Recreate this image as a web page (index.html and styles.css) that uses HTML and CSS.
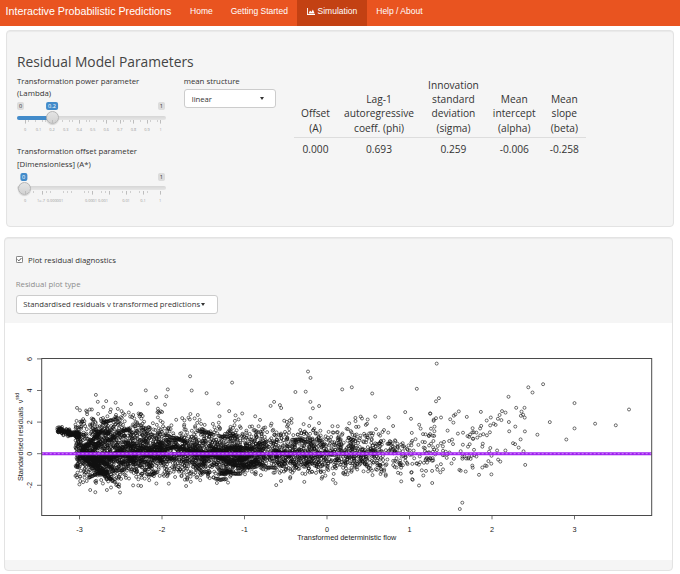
FILE: index.html
```html
<!DOCTYPE html>
<html lang="en">
<head>
<meta charset="utf-8">
<title>Interactive Probabilistic Predictions</title>
<link rel="stylesheet" href="styles.css">
</head>
<body>
<nav class="navbar">
  <span class="brand">Interactive Probabilistic Predictions</span>
  <ul class="nav">
    <li><a>Home</a></li>
    <li><a>Getting Started</a></li>
    <li class="active"><a><svg class="nav-icon" width="8" height="7" viewBox="0 0 8 7"><path d="M0 0h0.9v6.1H8V7H0z" fill="#fff"/><path d="M1.6 5.6L3 2.6l1.5 1.5 1.4-2.7 1.7 4.2z" fill="#fff"/></svg>Simulation</a></li>
    <li><a>Help / About</a></li>
  </ul>
</nav>

<section class="well params">
  <h3 class="title">Residual Model Parameters</h3>
  <div class="param-row">
    <div class="col-sliders">
      <div class="field">
        <label class="ctl-label">Transformation power parameter (Lambda)</label>
        <div class="slider">
          <span class="irs-min">0</span>
          <span class="irs-max">1</span>
          <span class="irs-single" style="left:35px">0.2</span>
          <span class="irs-line"></span>
          <span class="irs-bar" style="width:35.1px"></span>
          <span class="irs-handle" style="left:35.1px"></span>
          <span class="irs-grid grid-10"></span>
          <span class="irs-grid-text" style="left:8px">0</span>
          <span class="irs-grid-text" style="left:21.55px">0.1</span>
          <span class="irs-grid-text" style="left:35.1px">0.2</span>
          <span class="irs-grid-text" style="left:48.65px">0.3</span>
          <span class="irs-grid-text" style="left:62.2px">0.4</span>
          <span class="irs-grid-text" style="left:75.75px">0.5</span>
          <span class="irs-grid-text" style="left:89.3px">0.6</span>
          <span class="irs-grid-text" style="left:102.85px">0.7</span>
          <span class="irs-grid-text" style="left:116.4px">0.8</span>
          <span class="irs-grid-text" style="left:129.95px">0.9</span>
          <span class="irs-grid-text" style="left:143.5px">1</span>
        </div>
      </div>
      <div class="field">
        <label class="ctl-label">Transformation offset parameter [Dimensionless] (A*)</label>
        <div class="slider">
          <span class="irs-max">1</span>
          <span class="irs-single" style="left:6.7px">0</span>
          <span class="irs-line"></span>
          <span class="irs-handle" style="left:7px"></span>
          <span class="irs-grid grid-8"></span>
          <span class="irs-grid-text" style="left:8px">0</span>
          <span class="irs-grid-text" style="left:24px">1e-7</span>
          <span class="irs-grid-text" style="left:38px">0.000001</span>
          <span class="irs-grid-text" style="left:74px">0.0001</span>
          <span class="irs-grid-text" style="left:86px">0.001</span>
          <span class="irs-grid-text" style="left:109px">0.01</span>
          <span class="irs-grid-text" style="left:126px">0.1</span>
          <span class="irs-grid-text" style="left:143px">1</span>
        </div>
      </div>
    </div>

    <div class="col-select">
      <label class="ctl-label">mean structure</label>
      <div class="select"><span>linear</span><span class="caret"></span></div>
    </div>

    <table class="ptable">
      <thead>
        <tr>
          <th>Offset<br>(A)</th>
          <th>Lag-1<br>autoregressive<br>coeff. (phi)</th>
          <th>Innovation<br>standard<br>deviation<br>(sigma)</th>
          <th>Mean<br>intercept<br>(alpha)</th>
          <th>Mean<br>slope<br>(beta)</th>
        </tr>
      </thead>
      <tbody>
        <tr>
          <td>0.000</td>
          <td>0.693</td>
          <td>0.259</td>
          <td>-0.006</td>
          <td>-0.258</td>
        </tr>
      </tbody>
    </table>
  </div>
</section>

<section class="well diag">
  <div class="controls">
    <label class="check">
      <svg class="cb" width="7" height="7" viewBox="0 0 7 7"><rect x="0.4" y="0.4" width="6.2" height="6.2" rx="1" fill="#fff" stroke="#555" stroke-width="0.8"/><path d="M1.6 3.5l1.3 1.3 2.5-2.7" fill="none" stroke="#333" stroke-width="0.9"/></svg>
      <span>Plot residual diagnostics</span>
    </label>
    <div class="muted-label">Residual plot type</div>
    <div class="select wide"><span>Standardised residuals v transformed predictions</span><span class="caret"></span></div>
  </div>
  <div class="plot">
    <svg class="plot-svg" width="667" height="237" viewBox="0 0 667 237">
      <g id="pts" fill="none" stroke="#111" stroke-width="0.6"></g>
      <line x1="36.7" y1="130.7" x2="646.7" y2="130.7" stroke="#a020f0" stroke-width="3"/>
      <line x1="36.7" y1="130.7" x2="646.7" y2="130.7" stroke="#dba8f8" stroke-width="0.8" stroke-dasharray="2 2"/>
      <rect x="36.7" y="35.5" width="610" height="157" fill="none" stroke="#4a4a4a" stroke-width="1"/>
      <g stroke="#4a4a4a" stroke-width="0.8">
        <line x1="32" y1="35.9" x2="36.7" y2="35.9"/>
        <line x1="32" y1="67.5" x2="36.7" y2="67.5"/>
        <line x1="32" y1="99.1" x2="36.7" y2="99.1"/>
        <line x1="32" y1="130.7" x2="36.7" y2="130.7"/>
        <line x1="32" y1="162.3" x2="36.7" y2="162.3"/>
        <line x1="74.5" y1="192.5" x2="74.5" y2="196.3"/>
        <line x1="157" y1="192.5" x2="157" y2="196.3"/>
        <line x1="239.5" y1="192.5" x2="239.5" y2="196.3"/>
        <line x1="322" y1="192.5" x2="322" y2="196.3"/>
        <line x1="404.5" y1="192.5" x2="404.5" y2="196.3"/>
        <line x1="487" y1="192.5" x2="487" y2="196.3"/>
        <line x1="569.5" y1="192.5" x2="569.5" y2="196.3"/>
      </g>
      <g class="axis-text" text-anchor="middle">
        <text transform="translate(26.9,35.9) rotate(-90)">6</text>
        <text transform="translate(26.9,67.5) rotate(-90)">4</text>
        <text transform="translate(26.9,99.1) rotate(-90)">2</text>
        <text transform="translate(26.9,130.7) rotate(-90)">0</text>
        <text transform="translate(26.9,162.3) rotate(-90)">-2</text>
        <text x="74.5" y="208.6">-3</text>
        <text x="157" y="208.6">-2</text>
        <text x="239.5" y="208.6">-1</text>
        <text x="322" y="208.6">0</text>
        <text x="404.5" y="208.6">1</text>
        <text x="487" y="208.6">2</text>
        <text x="569.5" y="208.6">3</text>
        <text x="341.7" y="217.3">Transformed deterministic flow</text>
        <text transform="translate(18.3,114) rotate(-90)">Standardised residuals <tspan dx="1.5">ν</tspan><tspan dy="-4" font-size="5">std</tspan></text>
      </g>
    </svg>
  </div>
</section>
<script src="script.js"></script>
</body>
</html>
```

FILE: styles.css
```css
* { box-sizing: border-box; }
html, body { margin: 0; padding: 0; background: #fff; }
body {
  width: 680px;
  font-family: "Open Sans", "DejaVu Sans", sans-serif;
  font-size: 7.7px;
  color: #333;
}

/* navbar */
.navbar {
  display: flex;
  height: 26px;
  background: #e95420;
  color: #fff;
  font-family: "Liberation Sans", Arial, sans-serif;
}
.brand {
  font-size: 10.7px;
  line-height: 23px;
  padding: 0 9.7px 3px 5.6px;
  white-space: nowrap;
}
.nav { display: flex; list-style: none; margin: 0; padding: 0; }
.nav a {
  display: flex;
  align-items: center;
  height: 26px;
  padding: 0 9px 2.5px;
  font-size: 8.5px;
  line-height: 23.5px;
  white-space: nowrap;
}
.nav .active a { background: #c34113; padding: 0 10px 2.5px; }
.nav-icon { margin-right: 2.7px; }

/* wells */
.well {
  background: #f5f5f5;
  border: 1px solid #e3e3e3;
  border-radius: 4px;
  box-shadow: inset 0 1px 1px rgba(0,0,0,0.05);
}
.params { margin: 3.5px 6px 0 6px; padding: 21.3px 10px 9.5px; }
.title {
  margin: 0 0 4px;
  font-size: 13.8px;
  line-height: 19px;
  font-weight: 400;
  color: #444;
}
.param-row { display: flex; align-items: flex-start; }
.col-sliders { width: 150px; }
.col-select { width: 92.3px; margin-left: 16.7px; }
.ctl-label {
  display: block;
  font-size: 7.8px;
  line-height: 12.3px;
  color: #333;
}

/* slider */
.slider { position: relative; height: 46.1px; }
.irs-min, .irs-max, .irs-single {
  position: absolute;
  top: 2.6px;
  height: 8px;
  line-height: 8px;
  font-size: 5.6px;
  padding: 0 2px;
  border-radius: 2px;
}
.irs-min { left: 0; background: rgba(0,0,0,0.1); color: #333; }
.irs-max { right: 2px; background: rgba(0,0,0,0.1); color: #333; }
.irs-single { background: #428bca; color: #fff; transform: translateX(-50%); }
.irs-line {
  position: absolute;
  top: 16.3px; left: 0; right: 1px;
  height: 4px;
  border-radius: 2px;
  background: linear-gradient(#d6d6d6, #e6e6e6);
}
.irs-bar {
  position: absolute;
  top: 16.3px; left: 0;
  height: 4px;
  border-radius: 2px 0 0 2px;
  background: #428bca;
}
.irs-handle {
  position: absolute;
  top: 11.8px;
  width: 13px; height: 13px;
  margin-left: -6.5px;
  border-radius: 50%;
  background: linear-gradient(#e4e4e4, #d2d2d2);
  border: 1px solid #b5b5b5;
  box-shadow: 0 1px 1px rgba(0,0,0,0.15);
}
.irs-grid { position: absolute; top: 20.6px; left: 8px; height: 4px; }
.grid-10 {
  width: 136.2px;
  background:
    repeating-linear-gradient(90deg, #bdbdbd 0 0.7px, transparent 0.7px 13.55px) 0 0 / 100% 3.6px no-repeat,
    repeating-linear-gradient(90deg, #cfcfcf 0 0.6px, transparent 0.6px 3.3875px) 0 0 / 100% 2px no-repeat;
}
.grid-8 {
  width: 135.7px;
  background:
    repeating-linear-gradient(90deg, #bdbdbd 0 0.7px, transparent 0.7px 16.875px) 0 0 / 100% 3.6px no-repeat,
    repeating-linear-gradient(90deg, #cfcfcf 0 0.6px, transparent 0.6px 4.21875px) 0 0 / 100% 2px no-repeat;
}
.irs-grid-text {
  position: absolute;
  top: 27.6px;
  font-size: 3.9px;
  line-height: 5px;
  color: #999;
  white-space: nowrap;
  transform: translateX(-50%);
}

/* selects */
.select {
  display: flex;
  align-items: center;
  justify-content: space-between;
  height: 19px;
  margin-top: 2.2px;
  padding: 0 11px 0 7px;
  background: #fff;
  border: 1px solid #ccc;
  border-radius: 3px;
  font-size: 7.7px;
  color: #333;
  white-space: nowrap;
}
.caret {
  width: 0; height: 0;
  border-left: 2.6px solid transparent;
  border-right: 2.6px solid transparent;
  border-top: 3px solid #333;
}
.select.wide {
  width: 202.6px;
  height: 19.6px;
  margin-top: 4.7px;
  justify-content: flex-start;
  padding-left: 6.6px;
}
.select.wide .caret { margin-left: 0.5px; }

/* parameter table */
.ptable {
  margin-left: 18px;
  margin-top: 3.1px;
  border-collapse: collapse;
  font-size: 10.2px;
  line-height: 14.2px;
  color: #333;
}
.ptable th {
  font-weight: 400;
  vertical-align: bottom;
  text-align: center;
  white-space: nowrap;
  padding: 0 7px 2.5px;
  border-bottom: 1px solid #ddd;
}
.ptable td {
  text-align: center;
  padding: 4px 7px 0;
}

/* diagnostics panel */
.diag { margin: 10px 7px 0 4px; padding: 0 0 10px; }
.controls { padding: 16px 10.7px 9px; }
.check {
  display: flex;
  align-items: center;
  gap: 5.3px;
  font-size: 7.8px;
  line-height: 12px;
  color: #333;
}
.cb { display: block; }
.muted-label {
  margin-top: 12.3px;
  font-size: 7.8px;
  line-height: 12px;
  color: #8c8c8c;
}
.plot { background: #fff; height: 236.7px; }
.plot-svg { display: block; }
.axis-text { font-family: "Liberation Sans", Arial, sans-serif; font-size: 7.3px; fill: #222; }
```

FILE: script.js
```js
(function () {
  var svgNS = "http://www.w3.org/2000/svg";
  var g = document.getElementById("pts");
  if (!g) return;
  var s = 20240611;
  function rand() {
    s = (s + 0x6D2B79F5) | 0;
    var t = Math.imul(s ^ (s >>> 15), 1 | s);
    t = (t + Math.imul(t ^ (t >>> 7), 61 | t)) ^ t;
    return ((t ^ (t >>> 14)) >>> 0) / 4294967296;
  }
  function norm() {
    var u = rand() || 1e-9, v = rand();
    return Math.sqrt(-2 * Math.log(u)) * Math.cos(2 * Math.PI * v);
  }
  var X0 = 322, SX = 82.5, Y0 = 130.7, SY = 15.8;
  var pts = [];
  function add(x, y) {
    if (x < -3.4 || x > 3.9 || y > 5.9 || y < -3.8) return;
    pts.push([X0 + SX * x, Y0 - SY * y]);
  }
  function sd(x) {
    if (x < -2.5) return 0.85;
    if (x < -2) return 0.8;
    if (x < -1) return 0.68;
    if (x < 0) return 0.6;
    if (x < 1) return 0.6;
    if (x < 2) return 0.9;
    return 1.0;
  }
  function mu(x) {
    if (x < -2.7) return 0.15;
    if (x < -2) return 0.1;
    if (x < 1.2) return 0;
    if (x < 2) return 0.35;
    return 1.3;
  }
  var i, k, x, y;
  // tight cluster at the far left
  for (i = 0; i < 170; i++) {
    x = -3.27 + 0.27 * rand();
    add(x, 1.5 - 1.2 * (x + 3.27) + 0.09 * norm());
  }
  // main cloud
  var segs = [
    [-3.05, -2.5, 0.17], [-2.5, -2.0, 0.17], [-2.0, -1.0, 0.27], [-1.0, 0, 0.22],
    [0, 0.7, 0.11], [0.7, 1.3, 0.04], [1.3, 2.0, 0.025], [2, 2.5, 0.007]
  ];
  var N = 3600;
  segs.forEach(function (sg) {
    var n = Math.round(N * sg[2]);
    for (var j = 0; j < n; j++) {
      var xx = sg[0] + (sg[1] - sg[0]) * rand();
      var z = norm();
      if (z > 0) z *= 1.25;
      var yy = mu(xx) + sd(xx) * z;
      if (xx > -2.4 && xx < 1.3 && yy < -2.05) yy = -2.05 + 0.2 * rand();
      if (rand() < 0.018) yy = mu(xx) + 1.6 + 1.1 * -Math.log(rand() || 1e-9);
      if (yy > 4.3) yy = 2.2 + 2 * rand();
      add(xx, yy);
    }
  });
  // autocorrelated streaks
  for (var r = 0; r < 60; r++) {
    var x0 = -3.0 + 2.6 * Math.pow(rand(), 1.4);
    var slope = 1.2 * norm();
    var len = 10 + Math.floor(18 * rand());
    y = 0.8 * norm();
    for (k = 0; k < len; k++) {
      x = x0 + k * 0.011;
      slope += 0.15 * norm();
      y = y + slope * 0.011 + 0.03 * norm();
      add(x, y);
    }
  }
  // steep fan lines near the left edge
  for (var f = 0; f < 16; f++) {
    var xs = -3.0 + 0.15 * rand();
    var ys = -0.2 + 0.6 * rand();
    var sl = (rand() < 0.6 ? -1 : 1) * (2.5 + 4 * rand());
    var n2 = 20 + Math.floor(15 * rand());
    for (k = 0; k < n2; k++) {
      x = xs + k * 0.012;
      y = ys + sl * (k * 0.012) + 0.05 * norm();
      if (y < -2.5 || y > 2.4) break;
      add(x, y);
    }
  }
  // isolated points read off the original figure
  [
    [1.33, 5.7], [-0.23, 5.2], [-0.2, 4.8], [-1.66, 4.9], [-1.64, 4.0], [-1.15, 4.5],
    [0.3, 4.2], [2.44, 4.2], [2.62, 4.4], [3.0, 3.2], [3.66, 2.8], [3.0, 1.6],
    [3.25, 1.9], [3.5, 1.8], [1.61, -3.5], [1.64, -3.1], [-2.05, 2.85], [-3.03, 2.9],
    [-2.85, 2.8], [2.2, 3.6], [2.35, 2.4], [2.7, 2.0], [2.55, 1.2], [2.28, 0.6],
    [2.1, -0.5], [2.9, 0.9]
  ].forEach(function (p) { add(p[0], p[1]); });

  var frag = document.createDocumentFragment();
  pts.forEach(function (p) {
    var c = document.createElementNS(svgNS, "circle");
    c.setAttribute("cx", p[0].toFixed(1));
    c.setAttribute("cy", p[1].toFixed(1));
    c.setAttribute("r", "1.5");
    frag.appendChild(c);
  });
  g.appendChild(frag);
})();
```
